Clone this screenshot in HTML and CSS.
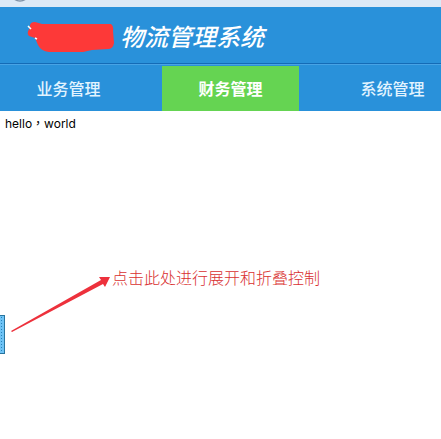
FILE: index.html
```html
<!DOCTYPE html>
<html lang="zh-CN">
<head>
	<meta charset="UTF-8">
	<title>物流管理系统</title>
	<link rel="stylesheet" href="styles.css">
</head>
<body>

<div class="browser-bar">
	<svg class="browser-icon" width="20" height="7" viewBox="0 0 20 7" aria-hidden="true">
		<circle cx="10" cy="-8" r="9" fill="#edf3fa" stroke="#7f93a8" stroke-width="1.5"/>
	</svg>
</div>

<header class="header">
	<svg class="logo" width="88" height="32" viewBox="0 0 88 32" aria-hidden="true">
		<path d="M3 6 Q2 0 8 0 L15 2 L84 2 Q87 4 86 9 L87 21 Q86 27 81 27 L65 28 L56 30 L22 30 Q14 29 11 23 L8 16 L2 14 Q-1 11 3 6Z" fill="#fd3938"/>
		<path d="M1 4 L4 7M8 16l2 1" fill="none" stroke="#fff" stroke-width="1.5"/>
	</svg>
	<h1 class="title">物流管理系统</h1>
</header>

<nav class="nav">
	<a class="nav-item" href="#business">业务管理</a>
	<a class="nav-item active" href="#finance">财务管理</a>
	<a class="nav-item" href="#system">系统管理</a>
</nav>

<main class="main">
	<p class="hello" lang="zh-TW">hello，world</p>

	<button class="toggle" type="button" aria-label="展开和折叠"></button>

	<!-- 折叠按钮说明 -->
	<div class="note">
		<svg class="arrow" width="100" height="56" viewBox="0 0 100 56" aria-hidden="true">
			<path d="M0 55 L90 4 L88 1 L99 1 L94 11 L92 8 L1 56Z" fill="#ed313c"/>
		</svg>
		<span class="note-text">点击此处进行展开和折叠控制</span>
	</div>
</main>

</body>
</html>
```
FILE: styles.css
```css
body { margin: 0; min-height: 100vh; display: flex; flex-direction: column; overflow: hidden; background-color: #ffffff; font-family: "Liberation Sans", "Noto Sans CJK SC", sans-serif; }

.browser-bar { height: 7px; padding-left: 10px; background-color: #dce9f6; }
.browser-icon { display: block; }

.header { display: flex; align-items: center; box-sizing: border-box; height: 57px; padding: 5px 0 0 27px; gap: 5px; background-color: #2991da; border-bottom: 1px solid #146bb6; }
.logo { flex: none; }
.title { margin: 0; font-size: 24px; line-height: 28px; font-weight: 500; font-style: italic; color: #ffffff; white-space: nowrap; }

.nav { display: flex; gap: 25px; padding-top: 1px; background-color: #2991da; border-top: 1px solid #48a3e5; }
.nav-item { flex: none; width: 137px; line-height: 48px; height: 45px; font-size: 16px; font-weight: 500; text-align: center; color: #e2f4ff; text-decoration: none; }
.nav-item.active { background-color: #65d452; color: #ffffff; font-weight: bold; }

.main { position: relative; flex: 1; }
.hello { margin: 0; padding: 4px 5px; font-family: Inter, "Noto Sans CJK TC", sans-serif; font-size: 12px; line-height: 18px; color: #000000; }

.toggle { position: absolute; left: 0; top: 204px; width: 5px; height: 39px; padding: 0; border: 1px solid #28759f; border-left: 0; background-color: #6fc3f5; background-image: radial-gradient(#2684bd 1px, transparent 1px); background-size: 3px 3px; cursor: pointer; }

.note { position: absolute; left: 11px; top: 156px; display: flex; align-items: flex-start; gap: 1px; color: #d9302f; }
.arrow { flex: none; margin-top: 9px; }
.note-text { font-size: 16px; font-weight: 300; line-height: 24px; white-space: nowrap; }
```
